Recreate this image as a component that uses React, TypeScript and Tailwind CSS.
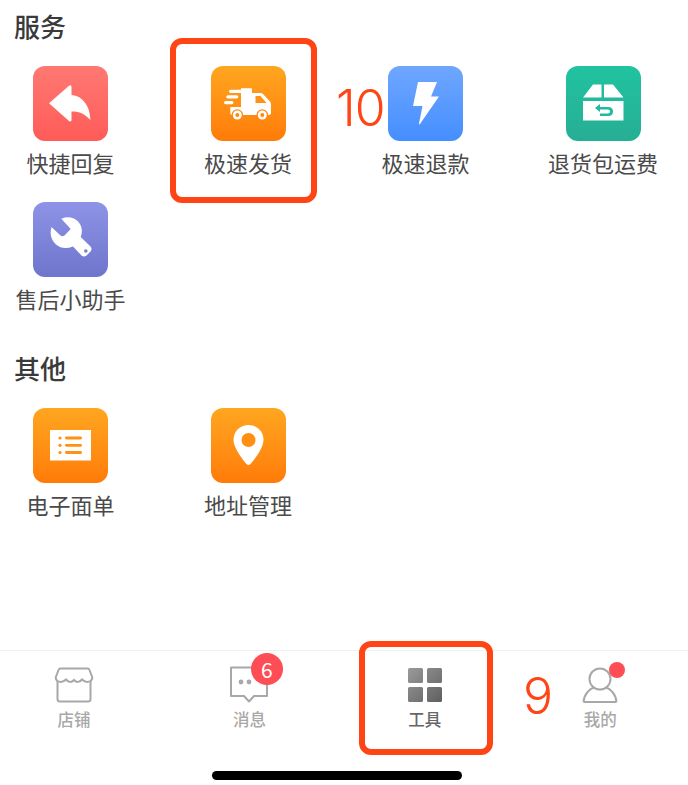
import React from 'react';

const IconBox = ({ gradient, children }: { gradient: string; children: React.ReactNode }) => (
  <div className={`w-[75px] h-[75px] rounded-[12px] bg-gradient-to-b ${gradient}`}>
    <svg width="75" height="75" viewBox="0 0 75 75">{children}</svg>
  </div>
);

const Tool = ({ label, icon }: { label: string; icon: React.ReactNode }) => (
  <div className="w-[75px] flex flex-col items-center">
    {icon}
    <span className="mt-[6px] mb-[2px] h-[30px] leading-[30px] text-[22px] text-[#4a4a4a] whitespace-nowrap">{label}</span>
  </div>
);

const orange = 'from-[#ffa61f] to-[#ff7b08]';

const ReplyIcon = () => (
  <IconBox gradient="from-[#ff7873] to-[#ff5b57]">
    <path d="M16 37.3 L36 19.8 Q38.5 18 38.5 21 V29 C50 30 57 40 57.4 54 C52 48 47 45.5 38.5 45.5 V53.5 Q38.5 56.5 36 55 Z" fill="#fff" />
  </IconBox>
);

const TruckIcon = () => (
  <IconBox gradient={orange}>
    <path d="M30 22.3 H40 Q41 22.3 41 23.3 V27 H50 Q51 27 52 28 L59 35.5 Q60 36.8 60 38.5 V47 Q60 49 58 49 H21 Q19.3 49 19.3 47.3 V41 H30 Z" fill="#fff" />
    <path d="M44.5 30 H49.5 L55.5 37 H44.5 Z" fill="#ff9212" />
    <rect x="18" y="23.7" width="14" height="3.2" rx="1.6" fill="#fff" />
    <rect x="15.3" y="29.2" width="12" height="3.2" rx="1.6" fill="#fff" />
    <rect x="13" y="35" width="9.5" height="3.2" rx="1.6" fill="#fff" />
    <circle cx="26.3" cy="49" r="5.8" fill="#ff8a10" />
    <circle cx="26.3" cy="49" r="4.5" fill="#fff" />
    <circle cx="26.3" cy="49" r="2" fill="#ff8a10" />
    <circle cx="51.3" cy="49" r="5.8" fill="#ff8a10" />
    <circle cx="51.3" cy="49" r="4.5" fill="#fff" />
    <circle cx="51.3" cy="49" r="2" fill="#ff8a10" />
  </IconBox>
);

const BoltIcon = () => (
  <IconBox gradient="from-[#6fa6ff] to-[#448eff]">
    <path d="M30 16 H49 L43 30.5 H51 L32 58 Q31 59 31 57.5 L34.5 40 H25 Z" fill="#fff" />
  </IconBox>
);

const BoxIcon = () => (
  <IconBox gradient="from-[#20c3a0] to-[#26ae94]">
    <path d="M17 31.5 L27 18.5 H35.5 V31.5 Z M38 18.5 H47 L57.5 31.5 H38 Z" fill="#fff" />
    <rect x="17" y="35" width="40.5" height="19.5" fill="#fff" />
    <path d="M34 38 L29 42 L34 46 V43.5 H42 Q44 43.5 44 45.5 Q44 47.5 42 47.5 H34 V50 H42 Q47 50 47 45.5 Q47 41 42 41 H34 Z" fill="#22ba9c" />
  </IconBox>
);

const WrenchIcon = () => (
  <IconBox gradient="from-[#8e93e7] to-[#6e75ca]">
    <path d="M28.3 16.7 Q38 13 45 19.5 Q51 26 47.7 35 L57.5 44.5 Q59.5 47 57.5 49.5 L53.5 53.5 Q51 55.5 48.5 53.5 L40 44.5 Q30 48.5 23 42.5 Q15.5 35.5 18.5 25 L27.5 33.5 Q29.5 35 31.5 33.5 L37.7 27 Z" fill="#fff" />
    <circle cx="52.8" cy="49" r="1.8" fill="#7a80d4" />
  </IconBox>
);

const ListIcon = () => (
  <IconBox gradient={orange}>
    <rect x="17" y="22" width="41" height="30.5" fill="#fff" />
    <circle cx="27" cy="30" r="1.6" fill="#ff9212" />
    <circle cx="27" cy="37.3" r="1.6" fill="#ff9212" />
    <circle cx="27" cy="44.5" r="1.6" fill="#ff9212" />
    <rect x="32" y="28.6" width="17" height="2.8" rx="1.4" fill="#ff9212" />
    <rect x="32" y="35.9" width="17" height="2.8" rx="1.4" fill="#ff9212" />
    <rect x="32" y="43.1" width="17" height="2.8" rx="1.4" fill="#ff9212" />
  </IconBox>
);

const PinIcon = () => (
  <IconBox gradient={orange}>
    <path d="M37.5 17 C46 17 52.5 23.5 52.5 32 C52.5 40 43 52 39.5 56 Q37.5 58 35.5 56 C32 52 22.5 40 22.5 32 C22.5 23.5 29 17 37.5 17 Z" fill="#fff" />
    <circle cx="37.5" cy="32" r="7" fill="#ff8f12" />
  </IconBox>
);

const Tab = ({ label, active, children }: { label: string; active?: boolean; children: React.ReactNode }) => (
  <div className="w-[50px] flex flex-col items-center">
    <div className="relative w-[40px] h-[40px] flex items-center justify-center">{children}</div>
    <span className={`mt-[2px] mb-[1px] h-6 leading-6 text-[16.5px] font-medium whitespace-nowrap ${active ? 'text-[#666666]' : 'text-[#a8a8a8]'}`}>{label}</span>
  </div>
);

export default function App() {
  return (
    <div
      className="relative w-[688px] h-[785px] bg-white flex flex-col overflow-hidden"
      style={{ fontFamily: '"Noto Sans CJK SC", "Noto Sans", sans-serif' }}
    >
      {/* 服务 */}
      <h2 className="ml-[14px] mt-[7px] h-[38px] leading-[38px] text-[26px] font-medium text-[#3a3a3a]">服务</h2>
      <div className="mt-[21px] pl-[33px] grid grid-cols-[repeat(4,75px)] gap-x-[102.5px] gap-y-[23px]">
        <Tool label="快捷回复" icon={<ReplyIcon />} />
        <Tool label="极速发货" icon={<TruckIcon />} />
        <Tool label="极速退款" icon={<BoltIcon />} />
        <Tool label="退货包运费" icon={<BoxIcon />} />
        <Tool label="售后小助手" icon={<WrenchIcon />} />
      </div>

      {/* 其他 */}
      <h2 className="ml-[14px] mt-[34px] h-[38px] leading-[38px] text-[26px] font-medium text-[#3a3a3a]">其他</h2>
      <div className="mt-[21px] pl-[33px] grid grid-cols-[repeat(4,75px)] gap-x-[102.5px]">
        <Tool label="电子面单" icon={<ListIcon />} />
        <Tool label="地址管理" icon={<PinIcon />} />
      </div>

      {/* Tab bar */}
      <div className="mt-auto h-[135px] border-t border-[#f1f1f1] pt-[14px]">
        <div className="pl-[49px] flex gap-[125.4px]">
          <Tab label="店铺">
            <svg width="40" height="38" viewBox="0 0 40 38" fill="none" stroke="#a8a8a8" strokeWidth="2">
              <path d="M6.5 2.5 H33.5 Q35 2.5 35.5 4 L38 10.5 Q39 13 36.5 15 Q32 17.5 28 13.5 Q24 18 20 14 Q16 18 12 13.5 Q8 17.5 3.5 15 Q1 13 2 10.5 L4.5 4 Q5 2.5 6.5 2.5 Z" />
              <path d="M3.5 15 V33 Q3.5 35.5 6 35.5 H34 Q36.5 35.5 36.5 33 V15" />
            </svg>
          </Tab>
          <Tab label="消息">
            <svg width="40" height="38" viewBox="0 0 40 38" fill="none" stroke="#a8a8a8" strokeWidth="2">
              <path d="M2 1.5 H38 V30 H25 L20 35.5 L15 30 H2 Z" strokeLinejoin="round" />
              <circle cx="12" cy="16" r="2.4" fill="#a8a8a8" stroke="none" />
              <circle cx="20" cy="16" r="2.4" fill="#a8a8a8" stroke="none" />
            </svg>
            <span className="absolute left-[21.5px] top-[-12px] w-[32px] h-[32px] rounded-full bg-[#ff4d55] text-white text-[21px] leading-[32px] text-center">6</span>
          </Tab>
          <Tab label="工具" active>
            <svg width="36" height="36" viewBox="0 0 36 36">
              <defs>
                <linearGradient id="grid-fill" x1="0" y1="0" x2="1" y2="1">
                  <stop offset="0" stopColor="#9a9a9a" />
                  <stop offset="1" stopColor="#5f5f5f" />
                </linearGradient>
              </defs>
              <path d="M2.5 1 H14.5 Q16 1 16 2.5 V14.5 Q16 16 14.5 16 H2.5 Q1 16 1 14.5 V2.5 Q1 1 2.5 1 Z M21.5 1 H33.5 Q35 1 35 2.5 V14.5 Q35 16 33.5 16 H21.5 Q20 16 20 14.5 V2.5 Q20 1 21.5 1 Z M2.5 20 H14.5 Q16 20 16 21.5 V33.5 Q16 35 14.5 35 H2.5 Q1 35 1 33.5 V21.5 Q1 20 2.5 20 Z M21.5 20 H33.5 Q35 20 35 21.5 V33.5 Q35 35 33.5 35 H21.5 Q20 35 20 33.5 V21.5 Q20 20 21.5 20 Z" fill="url(#grid-fill)" />
            </svg>
          </Tab>
          <Tab label="我的">
            <svg width="36" height="36" viewBox="0 0 36 36" fill="none" stroke="#a8a8a8" strokeWidth="2">
              <circle cx="18" cy="12" r="10.5" />
              <path d="M1.5 35 C2 27 8 21.5 12 20.5 M34.5 35 C34 27 28 21.5 24 20.5 M1.5 35 H34.5" />
            </svg>
            <span className="absolute left-[29px] top-[-3px] w-4 h-4 rounded-full bg-[#ff4d55]" />
          </Tab>
        </div>
        <div className="mt-[39px] ml-[212px] w-[250px] h-[9px] rounded-full bg-black" />
      </div>

      {/* annotations */}
      <div className="absolute left-[170px] top-[38px] w-[147px] h-[165px] border-[6px] border-[#ff4415] rounded-[12px]" />
      <span className="absolute left-[336px] top-[70px] text-[50px] leading-[76px] tracking-[-1px] font-light text-[#ff4415]" style={{ fontFamily: 'Inter, sans-serif' }}>10</span>
      <div className="absolute left-[359px] top-[641px] w-[134px] h-[114px] border-[6px] border-[#ff4415] rounded-[12px]" />
      <span className="absolute left-[523px] top-[658px] text-[50px] leading-[76px] font-light text-[#ff4415]" style={{ fontFamily: 'Inter, sans-serif' }}>9</span>
    </div>
  );
}
